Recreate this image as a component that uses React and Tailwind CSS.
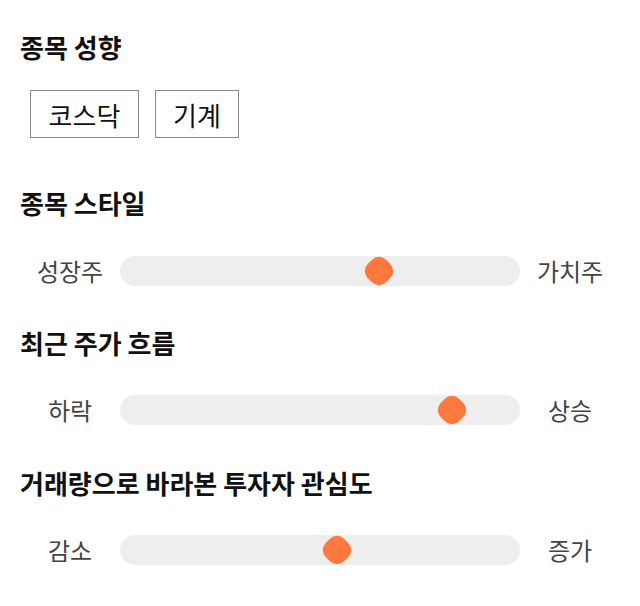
import React from "react";

const sliders = [
  { title: "종목 스타일", left: "성장주", right: "가치주", pos: 64.75 },
  { title: "최근 주가 흐름", left: "하락", right: "상승", pos: 83 },
  { title: "거래량으로 바라본 투자자 관심도", left: "감소", right: "증가", pos: 54.25 },
];

function Slider({ left, right, pos }) {
  return (
    <div className="flex items-center h-[30px]">
      <div className="w-[100px] text-center text-[24px] text-[#444] leading-[30px]">{left}</div>
      <div className="relative w-[400px] h-[30px] rounded-full bg-[#eeeeee]">
        <div
          className="absolute top-1/2 w-[26px] h-[26px] -translate-x-1/2 -translate-y-1/2 rotate-45 rounded-[10px] bg-[#ff783e]"
          style={{ left: `${pos}%` }}
        />
      </div>
      <div className="w-[100px] text-center text-[24px] text-[#444] leading-[30px]">{right}</div>
    </div>
  );
}

export default function App() {
  return (
    <div className="w-[640px] h-[606px] bg-white px-5 pt-[31px] font-['Noto_Sans_CJK_KR',sans-serif] text-[#111]">
      <h2 className="text-[26px] font-bold leading-[32px]">종목 성향</h2>
      <div className="flex gap-4 mt-[27px] ml-[10px]">
        <div className="w-[109px] h-[48px] border border-[#888] flex items-center justify-center text-[26px] text-[#111]">코스닥</div>
        <div className="w-[84px] h-[48px] border border-[#888] flex items-center justify-center text-[26px] text-[#111]">기계</div>
      </div>
      <h2 className="text-[26px] font-bold leading-[32px] mt-[49px]">{sliders[0].title}</h2>
      <div className="mt-[37px]">
        <Slider {...sliders[0]} />
      </div>
      <h2 className="text-[26px] font-bold leading-[32px] mt-[41px]">{sliders[1].title}</h2>
      <div className="mt-[36px]">
        <Slider {...sliders[1]} />
      </div>
      <h2 className="text-[26px] font-bold leading-[32px] mt-[42px]">{sliders[2].title}</h2>
      <div className="mt-[36px]">
        <Slider {...sliders[2]} />
      </div>
    </div>
  );
}
